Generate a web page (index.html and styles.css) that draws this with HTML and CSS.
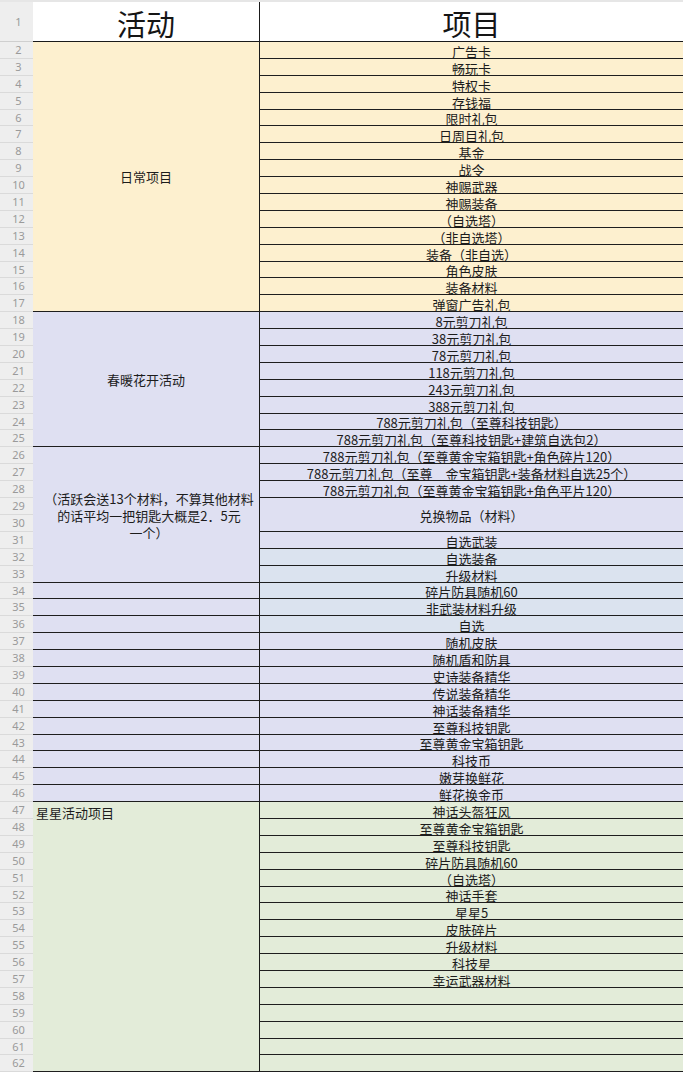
FILE: index.html
```html
<!DOCTYPE html>
<html lang="zh">
<head>
<meta charset="utf-8">
<title>活动项目</title>
<link rel="stylesheet" href="styles.css">
</head>
<body>
<div class="sheet">
  <div class="topstrip"></div>

  <div class="n hdr-n">1</div>
  <div class="a hdr">活动</div>
  <div class="b hdr">项目</div>

  <div class="n">2</div><div class="a y s16 mid">日常项目</div><div class="b y">广告卡</div>
  <div class="n">3</div><div class="b y">畅玩卡</div>
  <div class="n">4</div><div class="b y">特权卡</div>
  <div class="n">5</div><div class="b y">存钱福</div>
  <div class="n">6</div><div class="b y">限时礼包</div>
  <div class="n">7</div><div class="b y">日周目礼包</div>
  <div class="n">8</div><div class="b y">基金</div>
  <div class="n">9</div><div class="b y">战令</div>
  <div class="n">10</div><div class="b y">神赐武器</div>
  <div class="n">11</div><div class="b y">神赐装备</div>
  <div class="n">12</div><div class="b y">（自选塔）</div>
  <div class="n">13</div><div class="b y">（非自选塔）</div>
  <div class="n">14</div><div class="b y">装备（非自选）</div>
  <div class="n">15</div><div class="b y">角色皮肤</div>
  <div class="n">16</div><div class="b y">装备材料</div>
  <div class="n">17</div><div class="b y">弹窗广告礼包</div>

  <div class="n">18</div><div class="a l s8 mid">春暖花开活动</div><div class="b l">8元剪刀礼包</div>
  <div class="n">19</div><div class="b l">38元剪刀礼包</div>
  <div class="n">20</div><div class="b l">78元剪刀礼包</div>
  <div class="n">21</div><div class="b l">118元剪刀礼包</div>
  <div class="n">22</div><div class="b l">243元剪刀礼包</div>
  <div class="n">23</div><div class="b l">388元剪刀礼包</div>
  <div class="n">24</div><div class="b l">788元剪刀礼包（至尊科技钥匙）</div>
  <div class="n">25</div><div class="b l">788元剪刀礼包（至尊科技钥匙+建筑自选包2）</div>

  <div class="n">26</div><div class="a l s8 mid note">（活跃会送13个材料，不算其他材料<br>的话平均一把钥匙大概是2．5元<br>一个）</div><div class="b l">788元剪刀礼包（至尊黄金宝箱钥匙+角色碎片120）</div>
  <div class="n">27</div><div class="b l">788元剪刀礼包（至尊　金宝箱钥匙+装备材料自选25个）</div>
  <div class="n">28</div><div class="b l">788元剪刀礼包（至尊黄金宝箱钥匙+角色平片120）</div>
  <div class="n">29</div><div class="b l s2 center">兑换物品（材料）</div>
  <div class="n">30</div>
  <div class="n">31</div><div class="b l">自选武装</div>
  <div class="n">32</div><div class="b bl">自选装备</div>
  <div class="n">33</div><div class="b bl">升级材料</div>

  <div class="n">34</div><div class="a l"></div><div class="b bl">碎片防具随机60</div>
  <div class="n">35</div><div class="a l"></div><div class="b bl">非武装材料升级</div>
  <div class="n">36</div><div class="a l"></div><div class="b bl">自选</div>
  <div class="n">37</div><div class="a l"></div><div class="b l">随机皮肤</div>
  <div class="n">38</div><div class="a l"></div><div class="b l">随机盾和防具</div>
  <div class="n">39</div><div class="a l"></div><div class="b l">史诗装备精华</div>
  <div class="n">40</div><div class="a l"></div><div class="b l">传说装备精华</div>
  <div class="n">41</div><div class="a l"></div><div class="b l">神话装备精华</div>
  <div class="n">42</div><div class="a l"></div><div class="b l">至尊科技钥匙</div>
  <div class="n">43</div><div class="a l"></div><div class="b l">至尊黄金宝箱钥匙</div>
  <div class="n">44</div><div class="a l"></div><div class="b l">科技币</div>
  <div class="n">45</div><div class="a l"></div><div class="b l">嫩芽换鲜花</div>
  <div class="n">46</div><div class="a l"></div><div class="b l">鲜花换金币</div>

  <div class="n">47</div><div class="a g s16 topleft">星星活动项目</div><div class="b g">神话头盔狂风</div>
  <div class="n">48</div><div class="b g">至尊黄金宝箱钥匙</div>
  <div class="n">49</div><div class="b g">至尊科技钥匙</div>
  <div class="n">50</div><div class="b g">碎片防具随机60</div>
  <div class="n">51</div><div class="b g">（自选塔）</div>
  <div class="n">52</div><div class="b g">神话手套</div>
  <div class="n">53</div><div class="b g">星星5</div>
  <div class="n">54</div><div class="b g">皮肤碎片</div>
  <div class="n">55</div><div class="b g">升级材料</div>
  <div class="n">56</div><div class="b g">科技星</div>
  <div class="n">57</div><div class="b g">幸运武器材料</div>
  <div class="n">58</div><div class="b g"></div>
  <div class="n">59</div><div class="b g"></div>
  <div class="n">60</div><div class="b g"></div>
  <div class="n">61</div><div class="b g"></div>
  <div class="n">62</div><div class="b g"></div>
</div>
</body>
</html>
```
FILE: styles.css
```css
* { box-sizing: border-box; }
html, body { margin: 0; padding: 0; background: #ffffff; }
body {
  font-family: "Noto Sans CJK SC", "Noto Sans", sans-serif;
  color: #1c1c1c;
  width: 683px;
  height: 1075px;
  overflow: hidden;
}
.sheet {
  display: grid;
  grid-template-columns: 33px 226px 424px;
  grid-template-rows: 2px 40px repeat(61, 16.9px);
  background: #ececec;
}
.topstrip {
  grid-column: 1 / 4;
  background: #e6e6e6;
}
.n {
  grid-column: 1;
  background: #eeeeee;
  border-bottom: 1px solid #dadada;
  color: #9a9a9a;
  font-family: "Noto Sans", "DejaVu Sans", sans-serif;
  font-size: 11px;
  line-height: 16px;
  text-align: center;
  padding-left: 4px;
}
.hdr-n { line-height: 40px; border-bottom: 1px solid #cfcfcf; }
.a { grid-column: 2; border-bottom: 1px solid #1e1e1e; }
.b {
  grid-column: 3;
  border-left: 1px solid #1a1a1a;
  border-bottom: 1px solid #1e1e1e;
  display: flex;
  justify-content: center;
  align-items: flex-end;
  font-size: 13px;
  line-height: 13px;
  white-space: nowrap;
  overflow: visible;
}
.hdr {
  background: #ffffff;
  display: flex;
  justify-content: center;
  align-items: center;
  font-size: 29px;
  font-weight: 400;
  line-height: 34px;
  color: #151515;
  border-bottom: 1.5px solid #1a1a1a;
  padding-top: 2px;
}
.y { background: #fdf0cf; }
.l { background: #dfe0f2; }
.bl { background: #dbe3ef; }
.g { background: #e3ecd9; }
.s2 { grid-row: span 2; }
.s8 { grid-row: span 8; }
.s16 { grid-row: span 16; }
.mid {
  display: flex;
  justify-content: center;
  align-items: center;
  text-align: center;
  font-size: 13px;
  line-height: 17px;
}
.note { padding-left: 6px; padding-top: 2px; }
.b.center { align-items: center; padding-top: 3px; }
.topleft {
  font-size: 13px;
  line-height: 13px;
  padding: 4px 0 0 3px;
}
```
